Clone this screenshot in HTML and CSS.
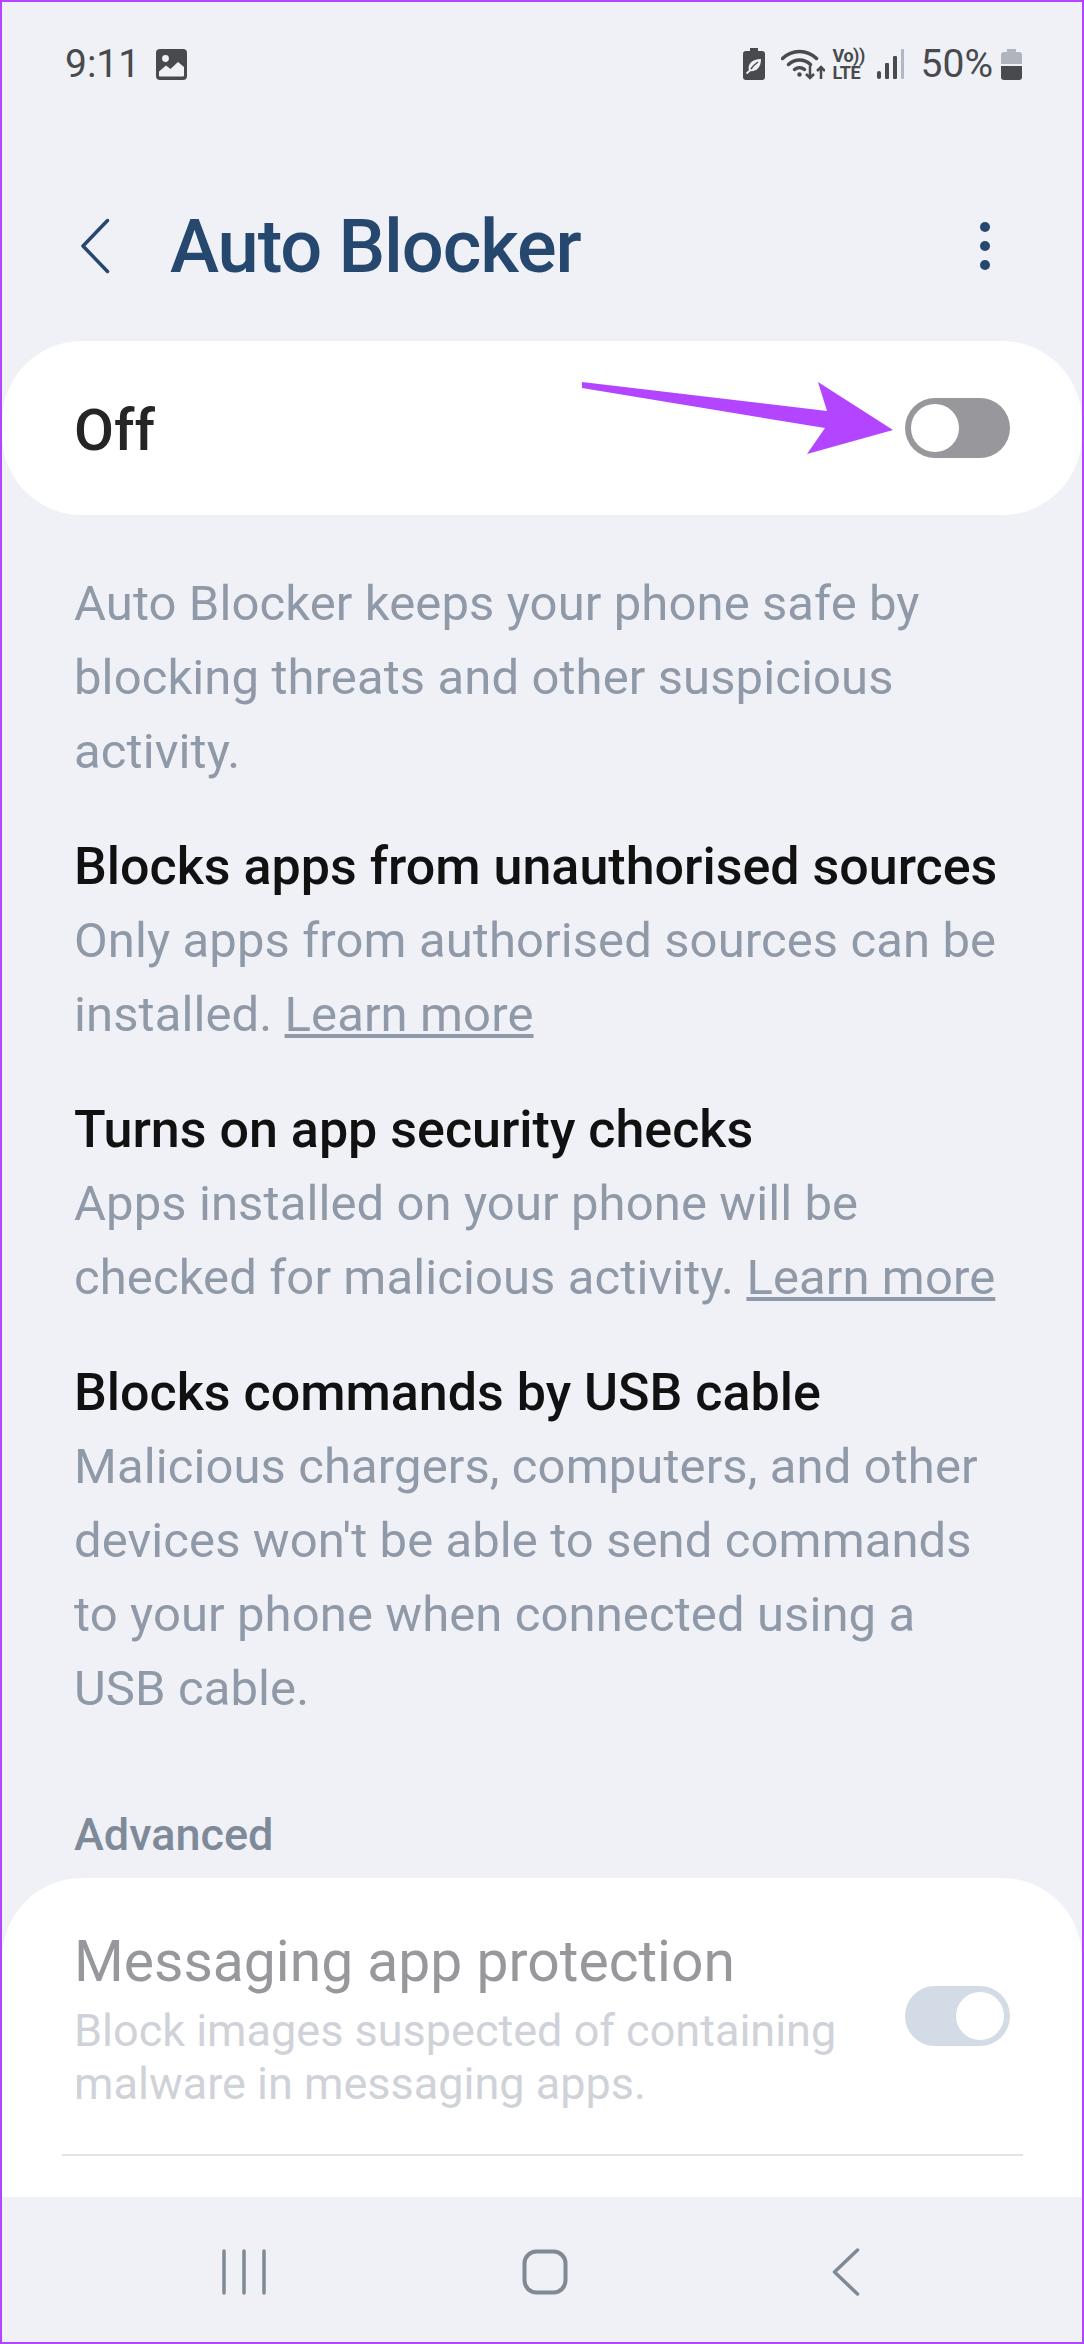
FILE: index.html
```html
<!DOCTYPE html>
<html>
  <head>
    <link rel="stylesheet" href="styles.css">
  </head>
  <body>
    <div class="screen">
      <!-- Status bar -->
      <div class="status-bar">
        <div class="status-left">
          <span class="status-time">9:11</span>
          <svg class="icon-image" viewBox="0 0 31 31">
            <rect width="31" height="31" rx="4" fill="#484a4d"/>
            <circle cx="9.5" cy="9.5" r="3.4" fill="#eff1f6"/>
            <path d="M3 26v-3.5l7-6 4.5 3.5 7.5-7 6 5v8.500a1 1 0 0 1-1 1H4a1 1 0 0 1-1-1.500z" fill="#eff1f6"/>
          </svg>
        </div>
        <div class="status-right">
          <svg class="icon-leaf" viewBox="0 0 22 32">
            <path d="M7 0h8v3h4a3 3 0 0 1 3 3v23a3 3 0 0 1-3 3H3a3 3 0 0 1-3-3V6a3 3 0 0 1 3-3h4z" fill="#484a4d"/>
            <path d="M6 23c-2-7 3-12 12-12 0 8-4 13-12 12z" fill="#eff1f6"/>
            <path d="M8 21c2-3 4-5 7-7" fill="none" stroke="#484a4d" stroke-width="1.500"/>
            <path d="M3.500 25.500L7 22.500" fill="none" stroke="#eff1f6" stroke-width="1.800"/>
          </svg>
          <svg class="icon-wifi" viewBox="0 0 44 32">
            <g fill="none" stroke="#484a4d" stroke-width="3.500" stroke-linecap="round">
              <path d="M1.500 10.500C11 1 26 1 35.500 10.500"/>
              <path d="M7.500 16.500c6.500-6 15.500-6 22 0"/>
              <path d="M13.500 21.500c3-2.500 7-2.500 10 0"/>
              <path d="M29 18v12M25 26l4 4 4-4" stroke-width="2.500" stroke-linecap="butt"/>
              <path d="M40 31V19M36 23l4-4 4 4" stroke-width="2.500" stroke-linecap="butt"/>
            </g>
            <circle cx="18.500" cy="26.500" r="2.200" fill="#484a4d"/>
          </svg>
          <div class="volte">
            <span>Vo))</span>
            <span>LTE</span>
          </div>
          <svg class="icon-signal" viewBox="0 0 27 30">
            <rect x="0" y="22" width="4" height="8" rx="2" fill="#484a4d"/>
            <rect x="8" y="14" width="4" height="16" rx="1" fill="#484a4d"/>
            <rect x="16" y="7" width="4" height="23" rx="1" fill="#484a4d"/>
            <rect x="24" y="0" width="3" height="30" rx="1" fill="#b0b8c4"/>
          </svg>
          <span class="status-battery-text">50%</span>
          <svg class="icon-battery" viewBox="0 0 21 31">
            <path d="M6 0h9v3h3a3 3 0 0 1 3 3v9H0V6a3 3 0 0 1 3-3h3z" fill="#b0b5bd"/>
            <path d="M0 17h21v11a3 3 0 0 1-3 3H3a3 3 0 0 1-3-3z" fill="#484a4d"/>
          </svg>
        </div>
      </div>

      <!-- Header -->
      <div class="header">
        <svg class="icon-back" viewBox="0 0 30 56">
          <path d="M27.500 2.500L3 28l24.500 25.500" fill="none" stroke="#26486f" stroke-width="3.500" stroke-linecap="round" stroke-linejoin="round"/>
        </svg>
        <div class="header-title">Auto Blocker</div>
        <div class="header-more">
          <span class="dot"></span>
          <span class="dot"></span>
          <span class="dot"></span>
        </div>
      </div>

      <div class="content">
        <!-- Master switch -->
        <div class="switch-card">
          <span class="switch-label">Off</span>
          <div class="toggle toggle-off"><span class="thumb"></span></div>
          <svg class="arrow" viewBox="0 0 311 72">
            <polygon points="0,0 245,29 236,0 311,48 225,72 243,46 0,6" fill="#b344ff"/>
          </svg>
        </div>

        <!-- Description -->
        <div class="info">
          <p class="info-text">Auto Blocker keeps your phone safe by blocking threats and other suspicious activity.</p>

          <h3 class="info-title">Blocks apps from unauthorised sources</h3>
          <p class="info-text">Only apps from authorised sources can be installed. <a class="info-link">Learn more</a></p>

          <h3 class="info-title">Turns on app security checks</h3>
          <p class="info-text">Apps installed on your phone will be checked for malicious activity. <a class="info-link">Learn more</a></p>

          <h3 class="info-title">Blocks commands by USB cable</h3>
          <p class="info-text">Malicious chargers, computers, and other devices won't be able to send commands to your phone when connected using a USB cable.</p>
        </div>

        <!-- Advanced -->
        <div class="section-label">Advanced</div>
        <div class="advanced-card">
          <div class="advanced-row">
            <div class="advanced-text">
              <div class="advanced-title">Messaging app protection</div>
              <div class="advanced-desc">Block images suspected of containing malware in messaging apps.</div>
            </div>
            <div class="toggle toggle-on"><span class="thumb"></span></div>
          </div>
          <div class="divider"></div>
        </div>
      </div>

      <!-- Navigation bar -->
      <div class="nav-bar">
        <div class="nav-slot">
          <svg class="icon-recents" viewBox="0 0 44 46">
            <path d="M2 2v42M22 2v42M42 2v42" fill="none" stroke="#7f8a97" stroke-width="3.500" stroke-linecap="round"/>
          </svg>
        </div>
        <div class="nav-slot">
          <svg class="icon-home" viewBox="0 0 46 46">
            <rect x="2.500" y="2.500" width="41" height="41" rx="12" fill="none" stroke="#7f8a97" stroke-width="4"/>
          </svg>
        </div>
        <div class="nav-slot">
          <svg class="icon-nav-back" viewBox="0 0 28 48">
            <path d="M25.500 2L2.500 24l23 22" fill="none" stroke="#7f8a97" stroke-width="3.500" stroke-linecap="round" stroke-linejoin="round"/>
          </svg>
        </div>
      </div>
    </div>
  </body>
</html>
```

FILE: styles.css
```css
* {
  margin: 0;
  padding: 0;
  box-sizing: border-box;
}

body {
  background: #eff1f6;
  font-family: Roboto, sans-serif;
}

.screen {
  width: 1084px;
  height: 2344px;
  border: 2px solid #b344ff;
  background: #eff1f6;
  display: flex;
  flex-direction: column;
  overflow: hidden;
}

/* Status bar */
.status-bar {
  height: 124px;
  flex: none;
  display: flex;
  justify-content: space-between;
  align-items: center;
  padding: 0 60px 0 63px;
  color: #484a4d;
}

.status-left,
.status-right {
  display: flex;
  align-items: center;
}

.status-time {
  font-size: 39px;
  width: 91px;
}

.icon-image {
  width: 31px;
  height: 31px;
}

.icon-leaf {
  width: 22px;
  height: 32px;
  margin-right: 16px;
}

.icon-wifi {
  width: 44px;
  height: 32px;
  margin-right: 8px;
}

.volte {
  width: 31px;
  display: flex;
  flex-direction: column;
  font-size: 18px;
  line-height: 17px;
  font-weight: 700;
  letter-spacing: -0.5px;
  margin-right: 13px;
  white-space: nowrap;
}

.icon-signal {
  width: 27px;
  height: 30px;
  margin-right: 17px;
}

.status-battery-text {
  font-size: 39px;
  margin-right: 8px;
}

.icon-battery {
  width: 21px;
  height: 31px;
}

/* Header */
.header {
  height: 191px;
  flex: none;
  margin-top: 24px;
  display: flex;
  align-items: center;
  padding-left: 78px;
}

.icon-back {
  width: 30px;
  height: 56px;
}

.header-title {
  margin-left: 60px;
  padding-top: 2px;
  font-size: 74px;
  font-weight: 500;
  color: #26486f;
  letter-spacing: -1.1px;
}

.header-more {
  margin-left: auto;
  margin-right: 92px;
  display: flex;
  flex-direction: column;
  gap: 9px;
}

.dot {
  width: 10px;
  height: 10px;
  border-radius: 50%;
  background: #26486f;
}

/* Content */
.content {
  flex: 1;
  overflow: hidden;
}

.switch-card {
  position: relative;
  height: 174px;
  background: #fff;
  border-radius: 80px;
  display: flex;
  justify-content: space-between;
  align-items: center;
  padding: 0 72px 0 72px;
}

.switch-label {
  padding-top: 3px;
  font-size: 58px;
  font-weight: 500;
  color: #252525;
}

.arrow {
  position: absolute;
  left: 580px;
  top: 41px;
  width: 311px;
  height: 72px;
}

.toggle {
  width: 105px;
  height: 60px;
  border-radius: 30px;
  display: flex;
  align-items: center;
  padding: 0 6px;
  flex: none;
}

.toggle-off {
  background: #98989c;
}

.toggle-on {
  background: #d3dbe7;
  justify-content: flex-end;
}

.thumb {
  width: 48px;
  height: 48px;
  border-radius: 50%;
  background: #fff;
}

.info {
  padding: 52px 80px 0 72px;
}

.info-text {
  font-size: 49px;
  line-height: 74px;
  letter-spacing: 0.1px;
  color: #8f99a8;
}

.info-title {
  margin-top: 41px;
  font-size: 52px;
  line-height: 74px;
  font-weight: 500;
  color: #111;
  white-space: nowrap;
}

.info-link {
  text-decoration: underline;
}

.section-label {
  margin-top: 79px;
  padding-left: 72px;
  font-size: 45px;
  line-height: 60px;
  font-weight: 500;
  color: #7e8a99;
}

.advanced-card {
  margin-top: 13px;
  background: #fff;
  border-radius: 80px 80px 0 0;
  padding-top: 54px;
  height: 400px;
}

.advanced-row {
  display: flex;
  justify-content: space-between;
  align-items: flex-start;
  padding: 0 72px 0 72px;
}

.advanced-title {
  font-size: 57px;
  line-height: 60px;
  color: #97989c;
}

.advanced-desc {
  width: 800px;
  margin-top: 12px;
  font-size: 45px;
  line-height: 53px;
  color: #cfd2d8;
}

.advanced-row .toggle {
  margin-top: 54px;
}

.divider {
  height: 2px;
  margin: 44px 59px 0 60px;
  background: #dfe3ea;
}

/* Navigation bar */
.nav-bar {
  height: 145px;
  flex: none;
  background: #eff1f6;
  display: flex;
  padding: 5px 86px 0 92px;
}

.nav-slot {
  flex: 1;
  display: flex;
  align-items: center;
  justify-content: center;
}

.icon-recents {
  width: 44px;
  height: 46px;
}

.icon-home {
  width: 46px;
  height: 46px;
}

.icon-nav-back {
  width: 28px;
  height: 48px;
}
```
